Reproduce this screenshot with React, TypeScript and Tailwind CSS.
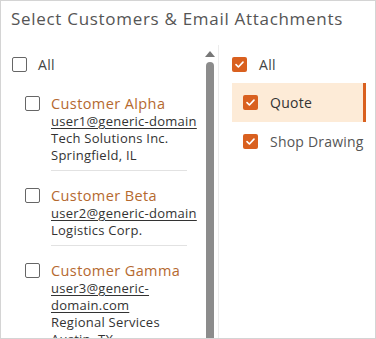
import React from "react";

const Check = ({ checked }: { checked: boolean }) =>
  checked ? (
    <div className="w-[15px] h-[15px] rounded-[2px] bg-[#d9601f] flex items-center justify-center shrink-0">
      <svg width="11" height="11" viewBox="0 0 12 12" fill="none">
        <path d="M2.2 6.2 L4.8 8.7 L9.8 3.4" stroke="white" strokeWidth="1.8" strokeLinecap="round" strokeLinejoin="round" />
      </svg>
    </div>
  ) : (
    <div className="w-[15px] h-[15px] rounded-[2px] border-[1.5px] border-[#666] bg-white shrink-0" />
  );

const customers = [
  { name: "Customer Alpha", email: ["user1@generic-domain"], lines: ["Tech Solutions Inc.", "Springfield, IL"] },
  { name: "Customer Beta", email: ["user2@generic-domain"], lines: ["Logistics Corp."] },
  { name: "Customer Gamma", email: ["user3@generic-", "domain.com"], lines: ["Regional Services", "Austin, TX"] },
];

export default function App() {
  return (
    <div
      className="w-[376px] h-[339px] border border-[#d4d4d4] bg-white overflow-hidden flex flex-col text-[#333]"
      style={{ fontFamily: "'Open Sans', 'Liberation Sans', sans-serif" }}
    >
      <div className="pl-[10px] pt-[6px] h-[44px] text-[17px] text-[#555] leading-[24px] tracking-[0.7px] whitespace-nowrap">
        Select Customers &amp; Email Attachments
      </div>
      <div className="flex flex-1 min-h-0">
        <div className="w-[202px] pl-[11px] pt-[12px] flex flex-col">
          <div className="flex items-center gap-[11px] h-[15px]">
            <Check checked={false} />
            <span className="text-[14px] text-[#444] tracking-[0.3px]">All</span>
          </div>
          <div className="pl-[13px] pt-[23px] flex flex-col">
            {customers.map((c, i) => (
              <div key={i} className="flex flex-col">
                <div className="flex gap-[11px]">
                  <div className="pt-[1px]">
                    <Check checked={false} />
                  </div>
                  <div className="flex flex-col text-[13px] leading-[17px] tracking-[0.25px] whitespace-nowrap">
                    <span className="text-[14.5px] leading-[18px] text-[#b5692f] tracking-[0.4px]">{c.name}</span>
                    {c.email.map((e, j) => (
                      <span key={j} className="underline underline-offset-2 text-[#333]">{e}</span>
                    ))}
                    {c.lines.map((l, j) => (
                      <span key={j}>{l}</span>
                    ))}
                  </div>
                </div>
                {i < customers.length - 1 && (
                  <div className="ml-[26px] w-[136px] h-px bg-[#e2e2e2] mt-[6px] mb-[16px]" />
                )}
              </div>
            ))}
          </div>
        </div>
        <div className="w-[14px] flex flex-col items-center pt-[6px]">
          <svg width="10" height="6" viewBox="0 0 10 6">
            <path d="M5 0 L10 6 L0 6 Z" fill="#777" />
          </svg>
          <div className="mt-[5px] w-[8px] flex-1 bg-[#8c8c8c] rounded-t-[4px]" />
        </div>
        <div className="w-px bg-[#ececec] ml-[1px]" />
        <div className="flex-1 pt-[12px] pl-[13px] pr-[9px] flex flex-col">
          <div className="flex items-center gap-[12px] h-[15px]">
            <Check checked={true} />
            <span className="text-[14px] text-[#444] tracking-[0.3px]">All</span>
          </div>
          <div className="mt-[11px] h-[39px] bg-[#fdebd7] border-r-[3px] border-[#d9601f] flex items-center pl-[11px] gap-[12px]">
            <Check checked={true} />
            <span className="text-[14px] text-[#333] tracking-[0.3px]">Quote</span>
          </div>
          <div className="mt-[12px] flex items-center pl-[11px] gap-[12px] h-[15px]">
            <Check checked={true} />
            <span className="text-[14px] text-[#555] tracking-[0.2px] whitespace-nowrap">Shop Drawing</span>
          </div>
        </div>
      </div>
    </div>
  );
}
